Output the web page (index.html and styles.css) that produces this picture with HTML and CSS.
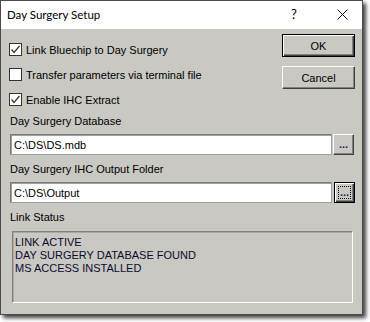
FILE: index.html
```html
<!DOCTYPE html>
<html>
<head>
<meta charset="utf-8">
<link rel="stylesheet" href="styles.css">
</head>
<body>
<div class="window">
  <div class="titlebar">
    <span class="title">Day Surgery Setup</span>
    <span class="help">?</span>
    <svg class="close" width="11" height="11" viewBox="0 0 11 11"><path d="M0.5 0.5L10.5 10.5M10.5 0.5L0.5 10.5" stroke="#111" stroke-width="1" fill="none"/></svg>
  </div>
  <div class="body">
    <div class="top">
      <div class="checks">
        <label class="check"><span class="box"><svg width="11" height="11" viewBox="0 0 11 11"><path d="M1.5 5.5L4 8.5L9.5 2" stroke="#333" stroke-width="1.2" fill="none"/></svg></span>Link Bluechip to Day Surgery</label>
        <label class="check"><span class="box"></span>Transfer parameters via terminal file</label>
        <label class="check"><span class="box"><svg width="11" height="11" viewBox="0 0 11 11"><path d="M1.5 5.5L4 8.5L9.5 2" stroke="#333" stroke-width="1.2" fill="none"/></svg></span>Enable IHC Extract</label>
      </div>
      <div class="buttons">
        <button class="btn default">OK</button>
        <button class="btn">Cancel</button>
      </div>
    </div>
    <div class="label l1">Day Surgery Database</div>
    <div class="field r1">
      <div class="edit">C:\DS\DS.mdb</div>
      <button class="dots">...</button>
    </div>
    <div class="label">Day Surgery IHC Output Folder</div>
    <div class="field r2">
      <div class="edit">C:\DS\Output</div>
      <button class="dots focus"><span class="ring">...</span></button>
    </div>
    <div class="label">Link Status</div>
    <div class="status">LINK ACTIVE<br>DAY SURGERY DATABASE FOUND<br>MS ACCESS INSTALLED</div>
  </div>
</div>
</body>
</html>
```
FILE: styles.css
```css
html, body { margin: 0; padding: 0; background: #fff; }
body { width: 370px; height: 322px; overflow: hidden; }
.window {
  width: 361px;
  height: 313px;
  border: 1px solid #4a4a4a;
  background: #c9c8c3;
  box-shadow: 3px 3px 4px rgba(0,0,0,0.75);
  font-family: "Liberation Sans", Arial, sans-serif;
  font-size: 11px;
  color: #000;
  display: flex;
  flex-direction: column;
}
.titlebar {
  height: 28px;
  background: #fff;
  display: flex;
  align-items: center;
  padding-left: 6px;
  box-sizing: border-box;
}
.title {
  font-family: Lato, "Noto Sans", sans-serif;
  font-size: 11.5px;
  flex: 1;
  color: #000;
  padding-bottom: 2px;
}
.help {
  font-family: Lato, "Noto Sans", sans-serif;
  font-size: 13px;
  width: 46px;
  text-align: center;
  margin-right: 20px;
  padding-bottom: 2px;
}
.close { margin: 0 14px 2px 0; }
.body { padding: 0 7px 0 8px; flex: 1; }
.top { display: flex; justify-content: space-between; }
.checks { padding-top: 8px; display: flex; flex-direction: column; }
.check { height: 25px; display: flex; align-items: center; gap: 4px; }
.box {
  width: 11px; height: 11px;
  border: 1px solid #333;
  background: #fff;
  display: flex;
  align-items: center;
  justify-content: center;
}
.buttons { padding-top: 5px; display: flex; flex-direction: column; gap: 9px; }
.btn {
  width: 73px; height: 23px;
  box-sizing: border-box;
  background: #c9c8c3;
  font: inherit;
  color: #000;
  border: 1px solid;
  border-color: #fff #404040 #404040 #fff;
  box-shadow: inset -1px -1px #808080;
  padding: 0;
}
.btn.default {
  border: 1px solid #000;
  box-shadow: inset 1px 1px #fff, inset -1px -1px #404040, inset -2px -2px #808080;
}
.label { height: 14px; line-height: 14px; margin-top: 7px; padding-left: 1px; }
.label.l1 { margin-top: 2px; }
.field { display: flex; margin-top: 6px; align-items: stretch; }
.edit {
  height: 21px;
  box-sizing: border-box;
  background: #fff;
  border: 1px solid #7a7a7a;
  border-right-color: #a0a0a0;
  border-bottom-color: #a0a0a0;
  box-shadow: inset 1px 1px #a0a0a0;
  padding: 3px 0 0 3px;
  line-height: 14px;
  color: #000;
}
.r1 .edit { width: 322px; margin-left: 1px; }
.r1 .dots { margin-left: 1px; }
.r2 .edit { width: 323px; margin-left: 1px; }
.r2 .dots { margin-left: 2px; }
.dots {
  width: 21px; height: 21px;
  box-sizing: border-box;
  background: #c9c8c3;
  border: 1px solid;
  border-color: #fff #404040 #404040 #fff;
  box-shadow: inset -1px -1px #808080;
  padding: 0;
  font: bold 11px "Liberation Sans", Arial, sans-serif;
  color: #2a1f6a;
  line-height: 10px;
  display: flex;
  align-items: flex-end;
  justify-content: center;
  padding-bottom: 5px;
}
.dots.focus {
  border: 1px solid #000;
  box-shadow: inset 1px 1px #fff, inset -1px -1px #404040, inset -2px -2px #808080;
  padding: 3px;
  align-items: stretch;
}
.ring {
  flex: 1;
  border: 1px dotted #000;
  display: flex;
  align-items: flex-end;
  justify-content: center;
  padding-bottom: 1px;
}
.status {
  margin: 7px 0 0 3px;
  width: 341px;
  height: 72px;
  box-sizing: border-box;
  border: 1px solid;
  border-color: #808080 #fff #fff #808080;
  box-shadow: inset 1px 1px #a8a8a8;
  padding: 4px 0 0 2px;
  line-height: 13px;
  color: #0c0c2c;
}
```
